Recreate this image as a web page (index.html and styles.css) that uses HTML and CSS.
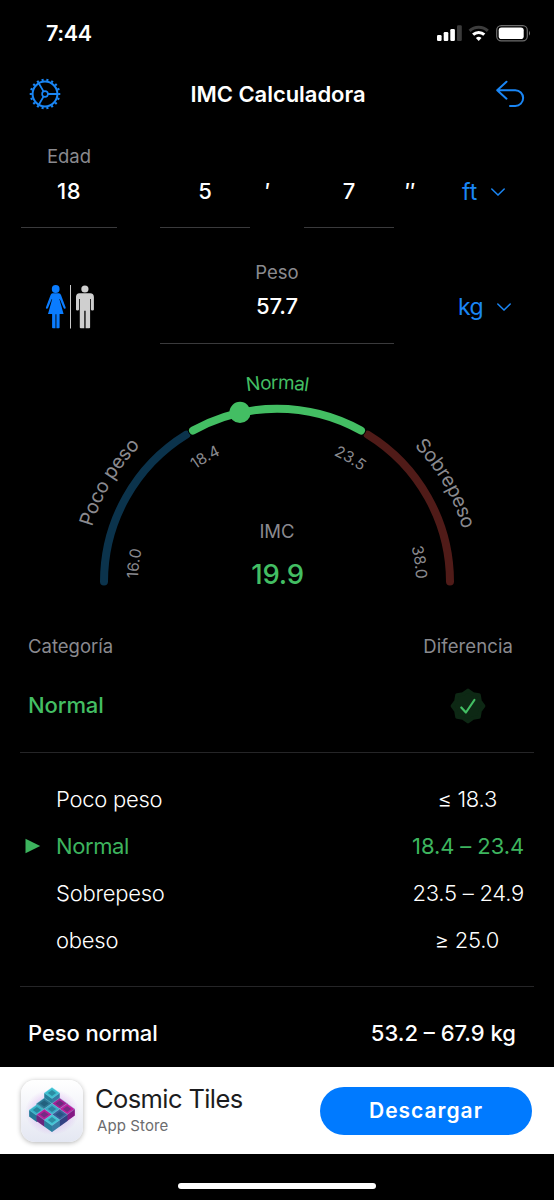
FILE: index.html
```html
<!DOCTYPE html>
<html lang="es">
<head>
<meta charset="utf-8">
<title>IMC Calculadora</title>
<link rel="stylesheet" href="styles.css">
</head>
<body>
<header class="status">
  <span class="clock">7:44</span>
  <svg class="status-icons" width="94" height="20" viewBox="436 23 94 20">
    <g fill="#fff">
      <rect x="437" y="35" width="4.6" height="6" rx="1.2"/>
      <rect x="443.7" y="32" width="4.6" height="9" rx="1.2"/>
      <rect x="450.3" y="29" width="4.6" height="12" rx="1.2"/>
      <rect x="457" y="25.3" width="4.8" height="15.7" rx="1.2" fill="#3b3b3b"/>
    </g>
    <g fill="none" stroke-width="3">
      <path d="M469.6 30.8a13.4 13.4 0 0 1 18.2 0" stroke="#3d3d3d"/>
      <path d="M473.1 34.7a8.2 8.2 0 0 1 11.2 0" stroke="#fff"/>
    </g>
    <path d="M475.9 38a4.2 4.2 0 0 1 5.6 0l-2.8 3z" fill="#fff"/>
    <rect x="496.7" y="25.6" width="30.6" height="15.2" rx="4.6" fill="none" stroke="#6d6d6d" stroke-width="1.2"/>
    <rect x="498.7" y="27.5" width="25" height="11.5" rx="2.8" fill="#fff"/>
    <path d="M529 30.7q2 2.5 0 5z" fill="#777"/>
  </svg>
</header>

<nav class="nav">
  <svg class="gear" width="32" height="32" viewBox="-16 -16 32 32" fill="none" stroke="#1a86f5">
    <circle r="12.4" stroke-width="2"/>
    <circle r="14.2" stroke-width="2.2" pathLength="72" stroke-dasharray="1.7 2.3" stroke-dashoffset="0.85"/>
    <circle r="2.9" stroke-width="1.6"/>
    <path d="M3 0h9.5M-1.5-2.6l-4.7-8.2M-1.5 2.6l-4.7 8.2" stroke-width="1.8"/>
  </svg>
  <h1 class="title">IMC Calculadora</h1>
  <svg class="undo" width="30" height="30" viewBox="495 79 30 30" fill="none" stroke="#1a86f5" stroke-width="2" stroke-linecap="round" stroke-linejoin="round">
    <path d="M506.500 81.700l-9.300 8.500 9.300 8.500M497.600 90.200H515.300a7.800 7.800 0 0 1 0 15.700H510"/>
  </svg>
</nav>

<section class="form">
  <div class="field age"><span class="label">Edad</span><span class="value">18</span></div>
  <div class="field feet"><span class="value">5</span></div>
  <span class="mark">′</span>
  <div class="field inches"><span class="value">7</span></div>
  <span class="mark mark-in">″</span>
  <span class="unit">ft<svg width="14" height="8" viewBox="0 0 14 8"><path d="M.8 1l6.200 6 6.200-6"/></svg></span>

  <svg class="gender" width="52" height="46" viewBox="45 284 52 46">
    <g fill="#0a7cff">
      <circle cx="55.700" cy="289" r="3.900"/>
      <path d="M52.500 293.300h6.400q1.500 0 2.100 1.600l4.600 12.300q.5 1.400-.6 1.600-1 .3-1.500-1l-3.700-8.800h-.4l4.200 15.100h-4v13.400q0 .7-.8.700h-2.400v-14h-.9v14h-2.600q-.8 0-.8-.7v-13.400h-4.100l4.200-15.100h-.4l-3.700 8.800q-.5 1.300-1.500 1-1.100-.2-.6-1.600l4.600-12.300q.6-1.600 1.900-1.600z"/>
    </g>
    <path d="M70.500 285v43.500" stroke="#c9c9c9"/>
    <g fill="#cfcfcf">
      <circle cx="84.900" cy="289" r="3.600"/>
      <path d="M79.500 293.300h10.700q3.700 0 3.700 3.800v12.300q0 1-1.500 1t-1.500-1v-10.500h-.8v28.500q0 .8-.9.800h-3.600v-17.400h-1.300v17.400h-3.600q-.9 0-.9-.8v-28.500h-.8v10.500q0 1-1.500 1t-1.500-1v-12.300q0-3.800 3.500-3.800z"/>
    </g>
  </svg>
  <div class="field weight"><span class="label">Peso</span><span class="value">57.7</span></div>
  <span class="unit unit-kg">kg<svg width="14" height="8" viewBox="0 0 14 8"><path d="M.8 1l6.200 6 6.200-6"/></svg></span>
</section>

<svg class="gauge" width="554" height="256" viewBox="0 356 554 256">
  <defs>
    <path id="outer" d="M84 582a193 193 0 0 1 386 0"/>
    <path id="inner" d="M138 582a139 139 0 0 1 278 0"/>
  </defs>
  <g fill="none" stroke-width="8" stroke-linecap="round">
    <path d="M104 581.500A173 173 0 0 1 186.300 434.600" stroke="#0b334c"/>
    <path d="M367.700 434.600A173 173 0 0 1 450 581.500" stroke="#501b18"/>
    <path d="M193 430.600A173 173 0 0 1 361 430.600" stroke="#000" stroke-width="10"/>
    <path d="M193 430.600A173 173 0 0 1 361 430.600" stroke="#43be63"/>
  </g>
  <circle cx="240" cy="412.400" r="10.600" fill="#43be63"/>
  <g class="arc-label" text-anchor="middle">
    <text><textPath href="#outer" startOffset="103.400">Poco peso</textPath></text>
    <text class="on"><textPath href="#outer" startOffset="303.200">Normal</textPath></text>
    <text><textPath href="#outer" startOffset="504">Sobrepeso</textPath></text>
  </g>
  <g class="tick" text-anchor="middle">
    <text><textPath href="#inner" startOffset="18">16.0</textPath></text>
    <text><textPath href="#inner" startOffset="145.600">18.4</textPath></text>
    <text><textPath href="#inner" startOffset="292.500">23.5</textPath></text>
    <text><textPath href="#inner" startOffset="417.300">38.0</textPath></text>
  </g>
  <text class="bmi-name" x="277" y="538" text-anchor="middle">IMC</text>
  <text class="bmi" x="277.500" y="584.400" text-anchor="middle">19.9</text>
</svg>

<section class="result">
  <div class="result-head"><span class="cat">Categoría</span><span class="diff">Diferencia</span></div>
  <div class="result-row">
    <span class="current">Normal</span>
    <svg width="36" height="36" viewBox="-18 -18 36 36">
      <path d="M15.600 0L12 5 11 11 5 12 0 15.600-5 12-11 11-12 5-15.600 0-12-5-11-11-5-12 0-15.600 5-12 11-11 12-5z" fill="#0d2814" stroke="#0d2814" stroke-width="3.600" stroke-linejoin="round"/>
      <path d="M-6.700 1.500l4.600 5 8.500-12.500" fill="none" stroke="#43be63" stroke-width="2.200" stroke-linecap="round" stroke-linejoin="round"/>
    </svg>
  </div>
</section>

<ul class="ranges">
  <li><span class="r1">Poco peso</span><span class="val v1">≤ 18.3</span></li>
  <li class="active"><svg width="16" height="16" viewBox="0 0 16 16"><path d="M.5.800L15.200 8 .5 15.200z" fill="#3db45e"/></svg><span class="r2">Normal</span><span class="val v2">18.4 – 23.4</span></li>
  <li><span class="r3">Sobrepeso</span><span class="val v3">23.5 – 24.9</span></li>
  <li><span class="r4">obeso</span><span class="val v4">≥ 25.0</span></li>
</ul>

<section class="normal"><span class="n1">Peso normal</span><span class="n2">53.2 – 67.9 kg</span></section>

<aside class="ad">
  <svg class="app" width="62" height="62" viewBox="0 0 62 62">
    <defs>
      <radialGradient id="glow"><stop offset=".5" stop-color="#c77be8" stop-opacity=".35"/><stop offset="1" stop-color="#c77be8" stop-opacity="0"/></radialGradient>
      <g id="cube">
        <path d="M0-5.500L7.700 0V6.500L0 12-7.700 6.500V0z"/>
        <path d="M-7.700 0L0 5.500V12l-7.700-5.500z" fill="#0c2f5c" fill-opacity=".45"/>
        <path d="M7.700 0L0 5.500V12l7.700-5.500z" fill="#2b1560" fill-opacity=".4"/>
        <path d="M0-3L4.200 0 0 3-4.200 0z" fill="#12405f" fill-opacity=".4"/>
        <path d="M0-5.500L7.700 0 0 5.500-7.700 0z" fill="none" stroke="#8fe6f2" stroke-width=".6" stroke-opacity=".6"/>
      </g>
    </defs>
    <ellipse cx="31" cy="32" rx="27" ry="23" fill="url(#glow)"/>
    <use href="#cube" x="31" y="18.500" fill="#b51f9b"/>
    <use href="#cube" x="31" y="13" fill="#3dbfd0"/>
    <use href="#cube" x="23.300" y="23.500" fill="#2d7795"/>
    <use href="#cube" x="38.700" y="23.500" fill="#a51f95"/>
    <use href="#cube" x="15.900" y="30" fill="#37b2c7"/>
    <use href="#cube" x="31" y="29" fill="#3caac8"/>
    <use href="#cube" x="46.100" y="29" fill="#c01e9f"/>
    <use href="#cube" x="23.300" y="34.500" fill="#b51f9b"/>
    <use href="#cube" x="38.700" y="34.500" fill="#39609b"/>
    <use href="#cube" x="31" y="40" fill="#43c3d4"/>
  </svg>
  <div class="ad-text"><span class="ad-name">Cosmic Tiles</span><span class="ad-store">App Store</span></div>
  <button class="get">Descargar</button>
</aside>
<footer class="home"><span class="bar"></span></footer>
</body>
</html>
```
FILE: styles.css
```css
* { box-sizing: border-box; }
body {
  margin: 0;
  width: 554px;
  height: 1200px;
  overflow: hidden;
  display: flex;
  flex-direction: column;
  background: #000;
  color: #fff;
  font-family: Inter, "Liberation Sans", sans-serif;
  font-size: 22px;
  white-space: nowrap;
}
svg { display: block; flex: none; }

.status {
  height: 66px;
  padding: 0 24px 0 46px;
  display: flex;
  justify-content: space-between;
  align-items: center;
}
.clock { font-size: 21.500px; font-weight: 600; letter-spacing: -0.4px; }

.nav {
  height: 56px;
  padding: 0 29px;
  display: flex;
  justify-content: space-between;
  align-items: center;
}
.title { margin: 0; font-size: 22px; font-weight: 600; letter-spacing: -0.05px; line-height: 26px; padding-bottom: 1px; }

.form {
  height: 234px;
  padding: 21px 20px 0 21px;
  display: grid;
  grid-template-columns: 96px 43px 90px 54px 90px 46px 1fr;
  grid-template-rows: 85px 116px;
}
.field {
  border-bottom: 1px solid #3a3a3c;
  display: flex;
  flex-direction: column;
  justify-content: flex-end;
  align-items: center;
}
.label { font-size: 18.500px; line-height: 26px; color: #8a8a8f; }
.value { font-size: 22px; font-weight: 500; line-height: 44px; padding-bottom: 14px; }
.age { grid-column: 1; }
.age .value { letter-spacing: 0.4px; }
.feet { grid-column: 3; }
.inches { grid-column: 5; }
.mark { font-size: 22px; font-weight: 500; line-height: 44px; padding: 26px 0 0 15px; }
.mark-in { padding-left: 11px; letter-spacing: -1px; }
.unit {
  display: flex;
  align-items: center;
  gap: 14px;
  height: 44px;
  margin-top: 27px;
  padding-left: 22px;
  color: #1a86f5;
  font-size: 23px;
}
.unit path { fill: none; stroke: #1a86f5; stroke-width: 1.500; stroke-linecap: round; }
.unit-kg { grid-column: 7; margin: 57px 0 0 -4px; letter-spacing: -0.6px; }
.gender { grid-column: 1; margin: 56px 0 0 24px; }
.weight { grid-column: 3 / 6; border-bottom-color: #3a3a3c; }
.weight .value { line-height: 43px; padding-bottom: 15px; letter-spacing: -0.1px; }

.arc-label { font-size: 19.500px; letter-spacing: -0.3px; fill: #8a8a8f; }
.arc-label .on, .bmi { fill: #43be63; }
.arc-label .on { font-size: 19px; letter-spacing: -0.7px; }
.tick { font-size: 15.500px; letter-spacing: -0.1px; fill: #8a8a8f; }
.bmi-name { font-size: 18.500px; fill: #8a8a8f; }
.bmi { font-size: 27.500px; font-weight: 500; letter-spacing: -0.2px; }

.result {
  height: 141px;
  margin: 0 20px;
  padding: 18px 21px 0 8px;
  border-bottom: 1px solid #252527;
}
.result-head, .result-row { display: flex; justify-content: space-between; align-items: center; }
.result-head { height: 32px; font-size: 18.500px; color: #8a8a8f; }
.diff { letter-spacing: 0.1px; }
.result-row { height: 36px; margin-top: 26px; padding-right: 27px; }
.current { color: #43be63; font-weight: 500; letter-spacing: -0.1px; padding-bottom: 2px; }

.ranges {
  list-style: none;
  height: 234px;
  margin: 0 20px;
  padding: 22px 10px 0 5px;
  border-bottom: 1px solid #252527;
  font-weight: 300;
}
.ranges li { height: 47px; display: flex; align-items: center; padding-left: 31px; letter-spacing: -0.25px; }
.ranges .active { color: #3db45e; padding-left: 0; gap: 15px; font-weight: 400; letter-spacing: -0.4px; }
.val { margin-left: auto; }
.v1 { margin-right: 27px; }
.active .v2 { letter-spacing: -0.1px; }
.v4 { margin-right: 25px; }

.normal {
  height: 80px;
  padding: 6px 38px 0 28px;
  display: flex;
  justify-content: space-between;
  line-height: 80px;
  font-weight: 500;
  letter-spacing: -0.1px;
}
.n2 { letter-spacing: 0; }

.ad {
  height: 87px;
  background: #fff;
  padding: 0 22px 0 21px;
  display: flex;
  align-items: center;
}
.app {
  border-radius: 14px;
  background: linear-gradient(#fff, #e4e7f2);
  box-shadow: 0 1px 5px rgba(0, 0, 0, .3);
}
.ad-text { display: flex; flex-direction: column; margin-left: 12px; }
.ad-name { font-size: 25.500px; line-height: 30px; letter-spacing: -0.6px; color: #1c1c1e; }
.ad-store { font-size: 15px; line-height: 24px; color: #6c6c6e; margin-left: 2px; letter-spacing: 0.1px; }
.get {
  width: 212px;
  height: 48px;
  margin-left: auto;
  border: 0;
  border-radius: 24px;
  background: #007aff;
  color: #fff;
  font: 600 21px Inter, "Liberation Sans", sans-serif;
  letter-spacing: 1px;
}
.home { height: 46px; display: flex; justify-content: center; padding-top: 29px; }
.bar { width: 198px; height: 6px; border-radius: 3px; background: #fff; }
```
